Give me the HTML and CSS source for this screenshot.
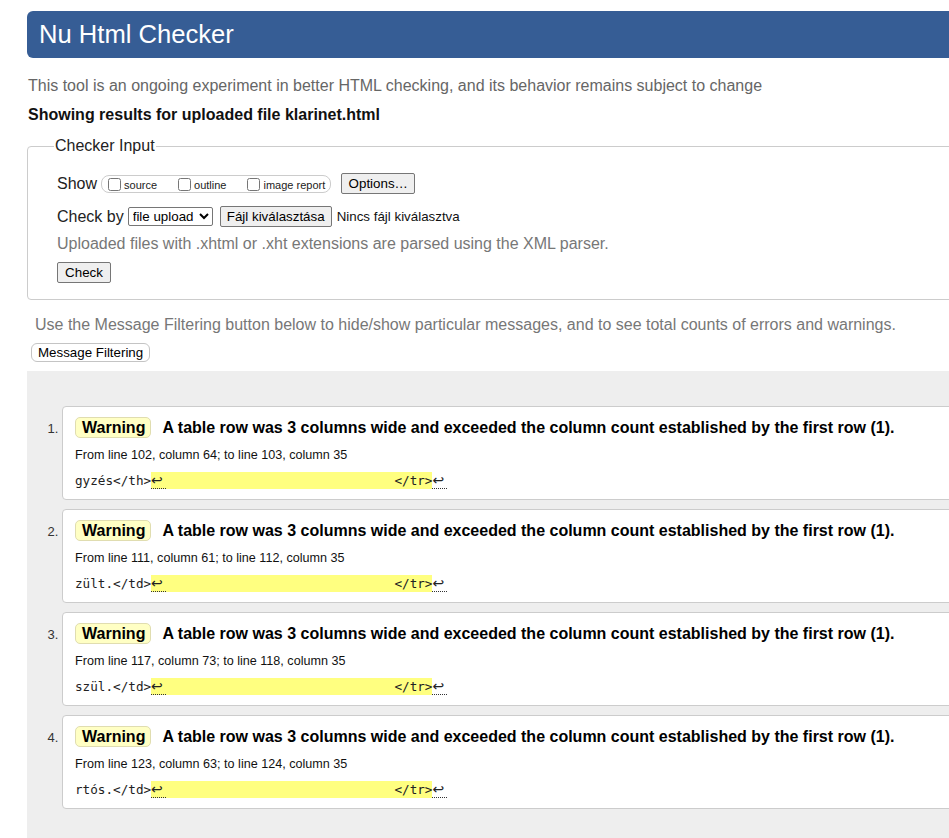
FILE: index.html
```html
<!DOCTYPE html>
<html lang="en">
<head>
<meta charset="utf-8">
<title>Nu Html Checker</title>
<link rel="stylesheet" href="styles.css">
</head>
<body>
<div class="page">
  <h1 class="header">Nu Html Checker</h1>
  <p class="intro">This tool is an ongoing experiment in better HTML checking, and its behavior remains subject to change</p>
  <p class="showing">Showing results for uploaded file klarinet.html</p>

  <fieldset class="input">
    <legend>Checker Input</legend>
    <div class="row row-show">
      <span class="label">Show</span>
      <span class="group">
        <label class="opt"><input type="checkbox">source</label>
        <label class="opt"><input type="checkbox">outline</label>
        <label class="opt"><input type="checkbox">image report</label>
      </span>
      <button class="btn btn-options" type="button">Options…</button>
    </div>
    <div class="row row-check">
      <span class="label">Check by</span>
      <select class="select"><option>file upload</option></select>
      <button class="btn btn-file" type="button">Fájl kiválasztása</button>
      <span class="nofile">Nincs fájl kiválasztva</span>
    </div>
    <div class="row row-note">Uploaded files with .xhtml or .xht extensions are parsed using the XML parser.</div>
    <div class="row row-submit"><button class="btn btn-check" type="button">Check</button></div>
  </fieldset>

  <p class="filter-note">Use the Message Filtering button below to hide/show particular messages, and to see total counts of errors and warnings.</p>
  <button class="btn-filter" type="button">Message Filtering</button>

  <div class="results">
    <ol class="messages">
      <li class="card">
        <p class="msg"><strong class="badge">Warning</strong>A table row was 3 columns wide and exceeded the column count established by the first row (1).</p>
        <p class="loc">From line 102, column 64; to line 103, column 35</p>
        <p class="code">gyzés&lt;/th&gt;<mark><span class="lf">↩</span>                              &lt;/tr&gt;</mark><span class="lf">↩</span></p>
      </li>
      <li class="card">
        <p class="msg"><strong class="badge">Warning</strong>A table row was 3 columns wide and exceeded the column count established by the first row (1).</p>
        <p class="loc">From line 111, column 61; to line 112, column 35</p>
        <p class="code">zült.&lt;/td&gt;<mark><span class="lf">↩</span>                              &lt;/tr&gt;</mark><span class="lf">↩</span></p>
      </li>
      <li class="card">
        <p class="msg"><strong class="badge">Warning</strong>A table row was 3 columns wide and exceeded the column count established by the first row (1).</p>
        <p class="loc">From line 117, column 73; to line 118, column 35</p>
        <p class="code">szül.&lt;/td&gt;<mark><span class="lf">↩</span>                              &lt;/tr&gt;</mark><span class="lf">↩</span></p>
      </li>
      <li class="card">
        <p class="msg"><strong class="badge">Warning</strong>A table row was 3 columns wide and exceeded the column count established by the first row (1).</p>
        <p class="loc">From line 123, column 63; to line 124, column 35</p>
        <p class="code">rtós.&lt;/td&gt;<mark><span class="lf">↩</span>                              &lt;/tr&gt;</mark><span class="lf">↩</span></p>
      </li>
    </ol>
  </div>
</div>
</body>
</html>
```

FILE: styles.css
```css
html, body {
  margin: 0;
  overflow: hidden;
  background: #fff;
}
body {
  font-family: "Liberation Sans", Arial, sans-serif;
  color: #111;
}
.page {
  width: 1250px;
  padding: 11px 0 0 27px;
}
.header {
  margin: 0;
  height: 47px;
  background: #365d95;
  border-radius: 6px;
  color: #fff;
  font-weight: normal;
  font-size: 25.6px;
  padding-left: 12px;
  display: flex;
  align-items: center;
}
.intro {
  margin: 19px 0 0 1px;
  font-size: 16px;
  line-height: 18px;
  color: #666;
}
.showing {
  margin: 11px 0 0 1px;
  font-size: 16px;
  line-height: 18px;
  font-weight: bold;
  color: #111;
}
.input {
  margin: 13px 0 0 0;
  border: 1px solid #ccc;
  border-radius: 4px;
  padding: 12px 0 16px 29px;
  min-width: 0;
}
.input legend {
  font-size: 16px;
  line-height: 18px;
  padding: 0 1px;
  margin-left: -3px;
  color: #222;
}
.row {
  display: flex;
  align-items: center;
  font-size: 16px;
  color: #222;
}
.row-show, .row-check {
  height: 33px;
}
.label {
  margin-right: 4px;
}
.group {
  display: inline-flex;
  align-items: flex-end;
  height: 18px;
  box-sizing: border-box;
  border: 1px solid #ccc;
  border-radius: 8px;
  padding: 0 5px 0 2px;
}
.opt {
  font-size: 11px;
  line-height: 13px;
  display: inline-flex;
  align-items: flex-end;
  margin-right: 17px;
  color: #222;
}
.opt:last-child {
  margin-right: 0;
}
.opt input {
  margin: 0 3px 1px 4px;
  width: 13px;
  height: 13px;
}
.btn {
  font-family: "Liberation Sans", Arial, sans-serif;
  font-size: 13.33px;
  height: 21px;
  padding: 0 6px;
  border: 1px solid #767676;
  border-radius: 2px;
  background: #efefef;
  color: #000;
}
.btn-options {
  margin-left: 10px;
  width: 74px;
}
.btn-check {
  width: 54px;
}
.select {
  font-family: "Liberation Sans", Arial, sans-serif;
  font-size: 13.33px;
  height: 19px;
  width: 85px;
  padding: 0;
  border: 1px solid #767676;
  border-radius: 2px;
  background: #fff;
  color: #000;
}
.btn-file {
  margin-left: 7px;
  width: 112px;
}
.nofile {
  font-size: 13.33px;
  margin-left: 5px;
  color: #111;
}
.row-note {
  height: 22px;
  color: #777;
}
.row-submit {
  margin-top: 7px;
  height: 21px;
}
.filter-note {
  margin: 16px 0 0 0;
  padding-left: 8px;
  font-size: 16px;
  line-height: 18px;
  color: #777;
}
.btn-filter {
  display: block;
  margin: 9px 0 0 4px;
  height: 19px;
  padding: 0 6px;
  font-family: "Liberation Sans", Arial, sans-serif;
  font-size: 13.33px;
  line-height: 17px;
  background: #fff;
  border: 1px solid #c4c4c4;
  border-radius: 6px;
  color: #000;
}
.results {
  margin-top: 9px;
  background: #eee;
  padding: 35px 0 60px 0;
  min-height: 500px;
}
.messages {
  margin: 0;
  padding: 0 0 0 35px;
  list-style: decimal;
}
.card {
  background: #fff;
  border: 1px solid #ccc;
  border-radius: 4px;
  padding: 10px 12px 10px 12px;
  margin-bottom: 9px;
  font-size: 13px;
  color: #333;
}
.card::marker {
  font-family: "Liberation Sans", Arial, sans-serif;
}
.msg {
  margin: 0;
  font-size: 16px;
  line-height: 21px;
  font-weight: bold;
  color: #000;
}
.badge {
  display: inline-block;
  line-height: 19px;
  padding: 0 5px 0 6px;
  border: 1px solid #e0ddb0;
  border-radius: 5px;
  background: #ffffc4;
  margin-right: 11px;
  vertical-align: top;
}
.loc {
  margin: 8px 0 0 0;
  font-size: 12.6px;
  line-height: 18px;
  color: #111;
}
.code {
  margin: 8px 0 0 0;
  font-family: "DejaVu Sans Mono", "Liberation Mono", monospace;
  font-size: 12.65px;
  line-height: 17px;
  height: 17px;
  white-space: pre;
  color: #222;
}
.code mark {
  display: inline-block;
  vertical-align: top;
  background: #ffff80;
  color: #222;
  line-height: 17px;
}
.lf {
  display: inline-block;
  vertical-align: top;
  width: 15px;
  font-family: "DejaVu Sans", sans-serif;
  font-size: 14px;
  line-height: 16px;
  overflow: hidden;
  border-bottom: 1px dotted #333;
}
```
